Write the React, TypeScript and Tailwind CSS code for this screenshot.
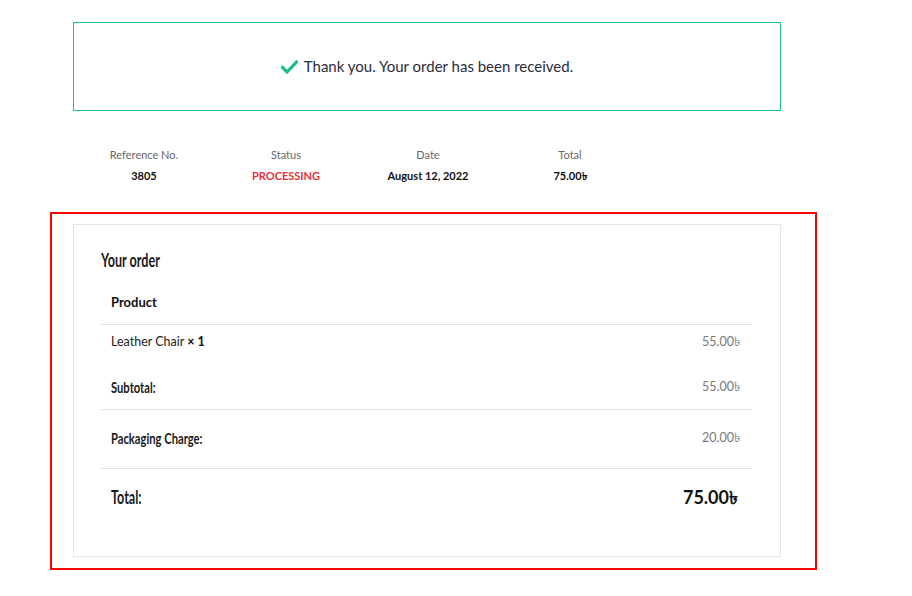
import React from "react";

const body = { fontFamily: 'Lato, "Noto Sans", sans-serif' };

function Check() {
  return (
    <svg width="17" height="14" viewBox="0 0 17 14" className="mr-[6px]">
      <path d="M1.5 7.5 L6 12 L15.5 2" fill="none" stroke="#22bd83" strokeWidth="3.2" strokeLinecap="square" />
    </svg>
  );
}

function Head({ children, size }: { children: React.ReactNode; size: string }) {
  return (
    <span className={"inline-block origin-left scale-x-[0.7] font-bold text-[#1a1a1a] whitespace-nowrap " + size}>
      {children}
    </span>
  );
}

export default function App() {
  const info = [
    { label: "Reference No.", value: "3805", red: false },
    { label: "Status", value: "PROCESSING", red: true },
    { label: "Date", value: "August 12, 2022", red: false },
    { label: "Total", value: "75.00৳", red: false },
  ];
  return (
    <div className="w-[912px] h-[596px] bg-white pt-[22px]" style={body}>
      <div className="ml-[73px] w-[708px] h-[89px] border border-[#22c38e] flex items-center justify-center">
        <Check />
        <span className="text-[15px] text-[#2b2b3a]">Thank you. Your order has been received.</span>
      </div>

      <div className="ml-[73px] mt-[36px] flex">
        {info.map((i) => (
          <div key={i.label} className="w-[142px] flex flex-col items-center">
            <div className="text-[11px] leading-[16px] text-[#666]">{i.label}</div>
            <div
              className={
                "mt-[5px] text-[11px] leading-[16px] font-bold " + (i.red ? "text-[#e8303a]" : "text-[#111]")
              }
            >
              {i.value}
            </div>
          </div>
        ))}
      </div>

      <div className="ml-[50px] mt-[28px] w-[767px] h-[358px] border-2 border-[#f00] pl-[21px] pt-[10px]">
        <div className="w-[708px] h-[333px] border border-[#e5e5e5] pl-[27px] pr-[28px] pt-[24px]">
          <div className="h-[22px] flex items-center">
            <Head size="text-[18px] leading-[22px]">Your order</Head>
          </div>
          <div className="mt-[10px] h-[44px] border-b border-[#e2e2e2] flex items-center px-[10px] text-[13px] font-bold text-[#111]">
            Product
          </div>
          <div className="flex justify-between items-center pl-[10px] pr-[12px] pt-[8px] pb-[13px] text-[12.5px] leading-[18px]">
            <span className="text-[#222]">
              Leather Chair <b className="text-[#111]">× 1</b>
            </span>
            <span className="text-[#777]">55.00৳</span>
          </div>
          <div className="flex justify-between items-center pl-[10px] pr-[12px] pt-[14px] pb-[13px] border-b border-[#e2e2e2]">
            <Head size="text-[16px] leading-[18px]">Subtotal:</Head>
            <span className="text-[12.5px] leading-[18px] text-[#777]">55.00৳</span>
          </div>
          <div className="flex justify-between items-center pl-[10px] pr-[12px] pt-[19px] pb-[21px] border-b border-[#e2e2e2]">
            <Head size="text-[16px] leading-[18px]">Packaging Charge:</Head>
            <span className="text-[12.5px] leading-[18px] text-[#777]">20.00৳</span>
          </div>
          <div className="flex justify-between items-center pl-[10px] pr-[14px] pt-[17px]">
            <Head size="text-[18px] leading-[22px]">Total:</Head>
            <span className="text-[18px] leading-[22px] font-bold text-[#111]">75.00৳</span>
          </div>
        </div>
      </div>
    </div>
  );
}
